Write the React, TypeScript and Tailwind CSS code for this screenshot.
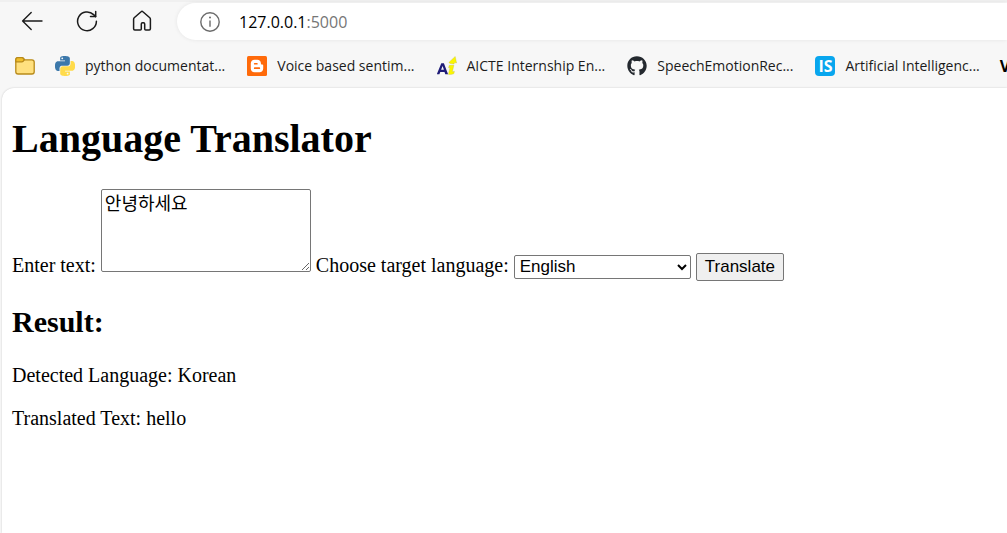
import { useState } from "react";
import type { ReactNode } from "react";
import { FaGithub } from "react-icons/fa";

function BackIcon() {
  return (
    <svg width="22" height="22" viewBox="0 0 22 22" fill="none" stroke="#1b1b1b" strokeWidth="1.4" strokeLinecap="round" strokeLinejoin="round">
      <path d="M21 11H1.6M10.2 2.4 1.6 11l8.6 8.6" />
    </svg>
  );
}

function ReloadIcon() {
  return (
    <svg width="22" height="22" viewBox="0 0 22 22" fill="none" stroke="#1b1b1b" strokeWidth="1.5" strokeLinecap="round" strokeLinejoin="round">
      <path d="M20.4 11.2A9.4 9.4 0 1 1 17.6 4.6l2 2" />
      <path d="M19.7 1.6v5h-5.2" />
    </svg>
  );
}

function HomeIcon() {
  return (
    <svg width="22" height="22" viewBox="0 0 22 22" fill="none" stroke="#1b1b1b" strokeWidth="1.5" strokeLinejoin="round">
      <path d="M2.6 9.2c0-.6.2-1 .6-1.4l6.9-6.1c.5-.5 1.3-.5 1.8 0l6.9 6.1c.4.4.6.8.6 1.4v9.6c0 .7-.5 1.2-1.2 1.2h-3.5c-.6 0-1-.4-1-1v-5c0-.7-.5-1.2-1.2-1.2h-1c-.7 0-1.2.5-1.2 1.2v5c0 .6-.4 1-1 1H3.8c-.7 0-1.2-.5-1.2-1.2z" />
    </svg>
  );
}

function InfoIcon() {
  return (
    <svg width="22" height="22" viewBox="0 0 22 22" fill="none" stroke="#6b6b6b" strokeWidth="1.4">
      <circle cx="11" cy="11" r="9.2" />
      <path d="M11 9.4v6.4" />
      <circle cx="11" cy="6.6" r="1" fill="#6b6b6b" stroke="none" />
    </svg>
  );
}

function FolderIcon() {
  return (
    <svg width="20" height="20" viewBox="0 0 20 20" stroke="#b88a1a" strokeWidth="1.3" strokeLinejoin="round">
      <path d="M.8 3.8c0-1.3.8-2.1 2-2.1h4.1c.6 0 1 .2 1.4.6l1.4 1.5h7.2c1.4 0 2.3.9 2.3 2.3v9.6c0 1.4-.9 2.3-2.3 2.3H3.1C1.7 18 .8 17.1.8 15.7z" fill="#ffe07f" />
      <path d="M.8 3.8c0-1.3.8-2.1 2-2.1h4.1c.6 0 1 .2 1.4.6l1 1.5-1.1 1.4c-.4.4-.8.6-1.4.6H.8z" fill="#f0be2c" />
    </svg>
  );
}

function PythonIcon() {
  return (
    <svg width="20" height="20" viewBox="0 0 24 24">
      <path
        fill="#3c78aa"
        d="M14.25.18l.9.2.73.26.59.3.45.32.34.34.25.34.16.33.1.3.04.26.02.2-.01.13V8.5l-.05.63-.13.55-.21.46-.26.38-.3.31-.33.25-.35.19-.35.14-.33.1-.3.07-.26.04-.21.02H8.77l-.69.05-.59.14-.5.22-.41.27-.33.32-.27.35-.2.36-.15.37-.1.35-.07.32-.04.27-.02.21v3.06H3.17l-.21-.03-.28-.07-.32-.12-.35-.18-.36-.26-.36-.36-.35-.46-.32-.59-.28-.73-.21-.88-.14-1.05-.05-1.23.06-1.22.16-1.04.24-.87.32-.71.36-.57.4-.44.42-.33.42-.24.4-.16.36-.1.32-.05.24-.01h.16l.06.01h8.16v-.83H6.18l-.01-2.75-.02-.37.05-.34.11-.31.17-.28.25-.26.31-.23.38-.2.44-.18.51-.15.58-.12.64-.1.71-.06.77-.04.84-.02 1.27.05zm-6.3 1.98l-.23.33-.08.41.08.41.23.34.33.22.41.09.41-.09.33-.22.23-.34.08-.41-.08-.41-.23-.33-.33-.22-.41-.09-.41.09z"
      />
      <path
        fill="#ffdb4b"
        d="M21.1 6.11l.28.06.32.12.35.18.36.27.36.35.35.47.32.59.28.73.21.88.14 1.04.05 1.23-.06 1.23-.16 1.04-.24.86-.32.71-.36.57-.4.45-.42.33-.42.24-.4.16-.36.09-.32.05-.24.02-.16-.01h-8.22v.82h5.84l.01 2.76.02.36-.05.34-.11.31-.17.29-.25.25-.31.24-.38.2-.44.17-.51.15-.58.13-.64.09-.71.07-.77.04-.84.01-1.27-.04-1.07-.14-.9-.2-.73-.25-.59-.3-.45-.33-.34-.34-.25-.34-.16-.33-.1-.3-.04-.25-.02-.2.01-.13v-5.34l.05-.64.13-.54.21-.46.26-.38.3-.32.33-.24.35-.2.35-.14.33-.1.3-.06.26-.04.21-.02.13-.01h5.84l.69-.05.59-.14.5-.21.41-.28.33-.32.27-.35.2-.36.15-.36.1-.35.07-.32.04-.28.02-.21V6.07h2.09l.14.01z"
      />
      <circle cx="15.1" cy="21.1" r="1.1" fill="#f7f7f7" />
    </svg>
  );
}

function BloggerIcon() {
  return (
    <svg width="20" height="20" viewBox="0 0 20 20">
      <rect width="20" height="20" rx="1.5" fill="#ff6a0a" />
      <path
        fill="#fff"
        fillRule="evenodd"
        d="M7.5 3.7h2.8c2.1 0 3.6 1.5 3.6 3.5 0 .9.2 1.3 1 1.3h.4c.6 0 .9.4.9 1v3c0 2.200-1.500 3.700-3.700 3.700h-5c-2.200 0-3.700-1.500-3.700-3.700V7.400c0-2.200 1.500-3.700 3.700-3.700zM7.700 6.900a.85.85 0 0 0 0 1.700h2.200a.85.85 0 0 0 0-1.700zM7.700 11.300a.85.85 0 0 0 0 1.700h4.600a.85.85 0 0 0 0-1.700z"
      />
    </svg>
  );
}

function AicteIcon() {
  return (
    <svg width="20" height="20" viewBox="0 0 20 20">
      <path fill="#1f1c78" fillRule="evenodd" d="M-.2 18.3 4.3 7.3h2.6l4.2 11H8.3l-.8-2.4H3.3l-.9 2.4zM4.1 13.800h2.800L5.600 10z" />
      <path d="M12.3 9.3h4.6l-1.5 6.500 2-.5-.4 2.200c-1.500 1-3.700 1.300-5.600.9l1.500-6.700h-1.400z" fill="#fbf600" stroke="#b5b147" strokeWidth=".3" />
      <path d="M11.800 6.400 18.200.4l1.400 6.600-2-.4-.6 1.400-4-.6z" fill="#fbf600" stroke="#b5b147" strokeWidth=".3" />
    </svg>
  );
}

function InternshalaIcon() {
  return (
    <span className="flex size-5 items-center justify-center rounded-sm bg-[#08a6ee] font-['Open_Sans',sans-serif] text-base leading-5 font-bold text-white">
      IS
    </span>
  );
}

function Bookmark({ icon, label }: { icon: ReactNode; label: string }) {
  return (
    <a href="#" className="flex shrink-0 items-center gap-2.5 whitespace-nowrap">
      {icon}
      <span>{label}</span>
    </a>
  );
}

function BrowserBar() {
  return (
    <header className="bg-[#f7f7f7] font-['Open_Sans',sans-serif] text-[#1b1b1b]">
      <div className="flex items-center border-t-2 border-[#f0f0f0] pb-1 pl-[21px]">
        <nav className="flex shrink-0 items-center gap-[33px]">
          <button type="button" aria-label="Back"><BackIcon /></button>
          <button type="button" aria-label="Refresh"><ReloadIcon /></button>
          <button type="button" aria-label="Home"><HomeIcon /></button>
        </nav>
        <div className="mt-px ml-6 flex h-[37px] min-w-0 flex-1 items-center gap-[18px] rounded-l-full bg-white pl-[22px] shadow-[0_0_4px_rgba(0,0,0,0.08)]">
          <InfoIcon />
          <span className="text-base text-black">
            127.0.0.1<span className="text-[#767676]">:5000</span>
          </span>
        </div>
      </div>
      <nav className="flex h-11 items-center gap-5 overflow-hidden pl-[15px] text-sm">
        <button type="button" aria-label="Bookmarks folder"><FolderIcon /></button>
        <div className="flex items-center gap-[22px]">
          <Bookmark icon={<PythonIcon />} label="python documentat..." />
          <Bookmark icon={<BloggerIcon />} label="Voice based sentim..." />
          <Bookmark icon={<AicteIcon />} label="AICTE Internship En..." />
          <Bookmark icon={<FaGithub size={20} color="#24292f" />} label="SpeechEmotionRec..." />
          <Bookmark icon={<InternshalaIcon />} label="Artificial Intelligenc..." />
        </div>
        <a href="#" aria-label="More bookmarks" className="shrink-0 text-base font-bold text-black">V</a>
      </nav>
    </header>
  );
}

export default function App() {
  const [text, setText] = useState("안녕하세요");

  return (
    <div className="flex min-h-screen flex-col bg-[#f7f7f7]">
      <BrowserBar />
      <main className="ml-0.5 flex-1 rounded-tl-xl bg-white px-2.5 pt-7 font-['Liberation_Serif',serif] text-[20px] leading-[23px] text-black shadow-[0_0_2px_rgba(0,0,0,0.2)]">
        <h1 className="text-[40px] leading-[46px] font-bold">Language Translator</h1>
        <form className="mt-[27px]" onSubmit={(e) => e.preventDefault()}>
          <label htmlFor="text">Enter text:</label>{" "}
          <textarea
            id="text"
            value={text}
            onChange={(e) => setText(e.target.value)}
            className="h-[83px] w-[210px] resize rounded-xs border border-[#767676] bg-white p-[3px] font-['Liberation_Mono','Noto_Sans_CJK_KR',monospace] text-[18px] leading-6"
          />{" "}
          <label htmlFor="language">Choose target language:</label>{" "}
          <select
            id="language"
            className="h-6 w-[177px] rounded-xs border border-[#767676] bg-white pl-px font-['Liberation_Sans',sans-serif] text-[17px] leading-5"
          >
            <option>English</option>
            <option>Korean</option>
          </select>{" "}
          <button
            type="submit"
            className="h-7 rounded-xs border border-[#767676] bg-[#efefef] px-2 font-['Liberation_Sans',sans-serif] text-[17px] leading-5"
          >
            Translate
          </button>
        </form>
        <h2 className="mt-6 text-[30px] leading-[34px] font-bold">Result:</h2>
        <p className="mt-[25px]">Detected Language: Korean</p>
        <p className="mt-5">Translated Text: hello</p>
      </main>
    </div>
  );
}
